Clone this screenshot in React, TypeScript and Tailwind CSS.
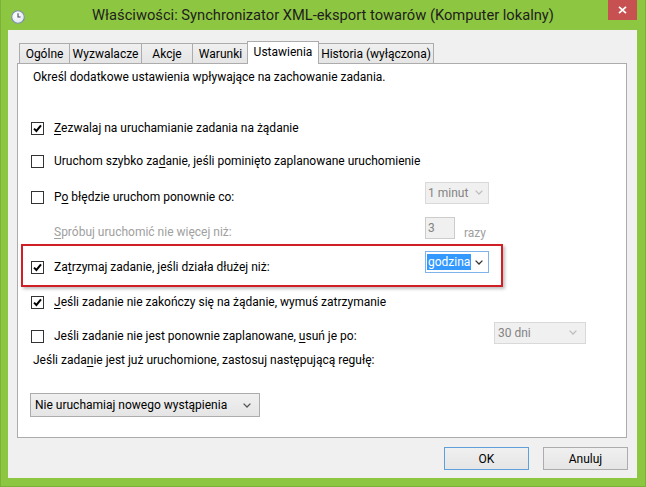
import React from "react";

function Check({ checked }: { checked: boolean }) {
  return (
    <span className="w-[13px] h-[13px] border border-[#333333] bg-white flex items-center justify-center shrink-0">
      {checked && (
        <svg width="9" height="9" viewBox="0 0 9 9">
          <path d="M1 4.6 L3.4 7 L8 1.4" stroke="#000" strokeWidth="2" fill="none" />
        </svg>
      )}
    </span>
  );
}

function Chevron({ color }: { color: string }) {
  return (
    <svg width="8" height="5" viewBox="0 0 8 5">
      <path d="M0.6 0.6 L4 4 L7.4 0.6" stroke={color} strokeWidth="1.3" fill="none" />
    </svg>
  );
}

function U({ children }: { children: React.ReactNode }) {
  return <span className="underline underline-offset-[2px]">{children}</span>;
}

export default function App() {
  return (
    <div className="w-[646px] h-[487px] bg-[#8dc641] border-x border-b border-[#7ab235] flex flex-col overflow-hidden font-[Roboto,'Noto_Sans',sans-serif] text-[12px] text-black">
      {/* Title bar */}
      <div className="h-[30px] grid grid-cols-[1fr_auto_1fr]">
        <div className="flex items-center pl-[10px] pt-[3px]">
          <svg width="14" height="14" viewBox="0 0 14 14">
            <defs>
              <radialGradient id="face" cx="0.4" cy="0.35" r="0.7">
                <stop offset="0" stopColor="#ffffff" />
                <stop offset="1" stopColor="#dfe6ee" />
              </radialGradient>
            </defs>
            <circle cx="7" cy="7" r="6.3" fill="url(#face)" stroke="#7a8fa6" strokeWidth="1.1" />
            <path d="M7 3.2 V7 H9.6" stroke="#3b4a5c" strokeWidth="1.1" fill="none" />
          </svg>
        </div>
        <div className="flex items-center text-[14.7px] text-[#1e1e1e] whitespace-nowrap">
          Właściwości: Synchronizator XML-eksport towarów (Komputer lokalny)
        </div>
        <div className="flex justify-end items-start pr-[8px]">
          <div className="w-[29px] h-[20px] bg-[#c75050] flex items-center justify-center">
            <svg width="9" height="8" viewBox="0 0 9 8">
              <path d="M1 0.8 L8 7.2 M8 0.8 L1 7.2" stroke="#ffffff" strokeWidth="1.7" />
            </svg>
          </div>
        </div>
      </div>

      {/* Client area */}
      <div className="ml-[7px] w-[629px] h-[448px] bg-[#f0f0f0] flex flex-col pt-[11px]">
        {/* Tabs */}
        <div className="h-[22px] flex items-end pl-[11px]">
          <div className="w-[51px] h-[20px] border-l border-t border-r border-[#acacac] bg-linear-to-b from-[#f0f0f0] to-[#e5e5e5] flex items-center justify-center">
            Ogólne
          </div>
          <div className="w-[72px] h-[20px] border-t border-r border-[#acacac] bg-linear-to-b from-[#f0f0f0] to-[#e5e5e5] flex items-center justify-center">
            Wyzwalacze
          </div>
          <div className="w-[51px] h-[20px] border-t border-r border-[#acacac] bg-linear-to-b from-[#f0f0f0] to-[#e5e5e5] flex items-center justify-center">
            Akcje
          </div>
          <div className="w-[56px] h-[20px] border-t border-r border-[#acacac] bg-linear-to-b from-[#f0f0f0] to-[#e5e5e5] flex items-center justify-center">
            Warunki
          </div>
          <div className="relative z-10 w-[72px] h-[23px] -mx-[2px] -mb-[1px] border-l border-t border-r border-[#acacac] bg-white flex items-center justify-center pb-[3px]">
            Ustawienia
          </div>
          <div className="w-[117px] h-[20px] border-t border-r border-[#acacac] bg-linear-to-b from-[#f0f0f0] to-[#e5e5e5] flex items-center justify-center pl-[2px]">
            Historia (wyłączona)
          </div>
        </div>

        {/* Panel */}
        <div className="relative ml-[9px] w-[610px] h-[375px] border border-[#acacac] bg-white flex flex-col">
          <div className="mt-[3px] h-[20px] flex items-center pl-[15px]">
            Określ dodatkowe ustawienia wpływające na zachowanie zadania.
          </div>

          <div className="mt-[31px] h-[20px] flex items-center pl-[13px]">
            <Check checked />
            <span className="ml-[10px]">
              <U>Z</U>ezwalaj na uruchamianie zadania na żądanie
            </span>
          </div>

          <div className="mt-[13px] h-[20px] flex items-center pl-[13px]">
            <Check checked={false} />
            <span className="ml-[10px]">
              Uruchom szybko za<U>d</U>anie, jeśli pominięto zaplanowane uruchomienie
            </span>
          </div>

          <div className="mt-[16px] h-[20px] flex items-center">
            <div className="w-[407px] flex items-center pl-[13px]">
              <Check checked={false} />
              <span className="ml-[10px]">
                P<U>o</U> błędzie uruchom ponownie co:
              </span>
            </div>
            <div className="-mt-[9px] w-[64px] h-[22px] border border-[#d9d9d9] bg-[#f0f0f0] flex items-center justify-between pl-[2px] pr-[5px] text-[#838383]">
              <span>1 minut</span>
              <Chevron color="#bdbdbd" />
            </div>
          </div>

          <div className="mt-[15px] h-[20px] flex items-center">
            <div className="w-[407px] pl-[36px] text-[#a0a0a0]">
              <U>S</U>próbuj uruchomić nie więcej niż:
            </div>
            <div className="-mt-[8px] w-[30px] h-[22px] border border-[#cccccc] bg-[#f0f0f0] pl-[2px] pt-[2px] text-[#838383] leading-[16px]">
              3
            </div>
            <span className="ml-[9px] mt-[2px] text-[#a0a0a0]">razy</span>
          </div>

          <div className="mt-[15px] h-[20px] flex items-center">
            <div className="w-[407px] flex items-center pl-[13px]">
              <Check checked />
              <span className="ml-[10px]">
                Za<U>t</U>rzymaj zadanie, jeśli działa dłużej niż:
              </span>
            </div>
            <div className="-mt-[10px] w-[64px] h-[22px] border border-[#7eb4ea] bg-white flex items-center justify-between pl-[1px] pr-[5px]">
              <span className="bg-[#3399ff] text-white leading-[16px] px-[1px]">godzina</span>
              <Chevron color="#333333" />
            </div>
          </div>

          <div className="mt-[15px] h-[20px] flex items-center pl-[13px]">
            <Check checked />
            <span className="ml-[10px]">
              <U>J</U>eśli zadanie nie zakończy się na żądanie, wymuś zatrzymanie
            </span>
          </div>

          <div className="mt-[14px] h-[20px] flex items-center">
            <div className="w-[476px] flex items-center pl-[13px]">
              <Check checked={false} />
              <span className="ml-[10px]">
                Jeśli zadanie nie jest ponownie zaplanowane, <U>u</U>suń je po:
              </span>
            </div>
            <div className="-mt-[7px] w-[92px] h-[22px] border border-[#d9d9d9] bg-[#f0f0f0] flex items-center justify-between pl-[3px] pr-[8px] text-[#838383]">
              <span>30 dni</span>
              <Chevron color="#bdbdbd" />
            </div>
          </div>

          <div className="mt-[4px] h-[20px] flex items-center pl-[15px]">
            Jeśli zada<U>n</U>ie jest już uruchomione, zastosuj następującą regułę:
          </div>

          <div className="mt-[23px] ml-[12px] w-[230px] h-[24px] border border-[#acacac] bg-linear-to-b from-[#f0f0f0] to-[#e5e5e5] flex items-center justify-between pl-[4px] pr-[8px]">
            <span>Nie uruchamiaj nowego wystąpienia</span>
            <Chevron color="#555555" />
          </div>

          {/* Red annotation frame */}
          <div className="absolute left-[3px] top-[180px] w-[482px] h-[43px] border-2 border-[#d11f26] shadow-[2px_2px_3px_rgba(0,0,0,0.25)]" />
        </div>

        {/* Buttons */}
        <div className="mt-[9px] flex justify-end gap-[14px] pr-[9px]">
          <div className="w-[85px] h-[23px] border border-[#5f9fdb] bg-linear-to-b from-[#f0f0f0] to-[#e5e5e5] flex items-center justify-center">
            OK
          </div>
          <div className="w-[85px] h-[23px] border border-[#acacac] bg-linear-to-b from-[#f0f0f0] to-[#e5e5e5] flex items-center justify-center">
            Anuluj
          </div>
        </div>
      </div>
    </div>
  );
}
